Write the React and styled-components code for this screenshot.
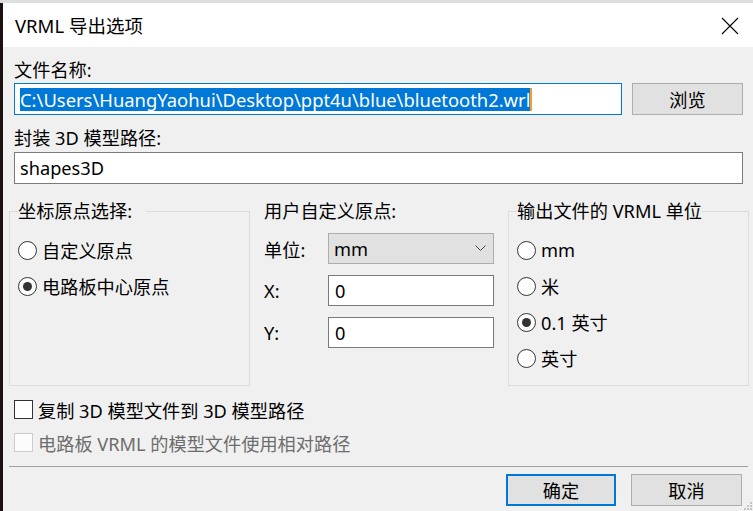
import styled, { createGlobalStyle } from "styled-components";

const GlobalStyle = createGlobalStyle`
  html, body {
    margin: 0;
    padding: 0;
  }
  body {
    font-family: "Noto Sans", "Noto Sans CJK SC", sans-serif;
    font-size: 18.2px;
    color: #000;
  }
`;

const Backdrop = styled.div`
  width: 753px;
  height: 511px;
  overflow: hidden;
  background: linear-gradient(to bottom, #dedede 3px, #1c1212 3px);
  display: flex;
  flex-direction: column;
  align-items: flex-end;
  justify-content: flex-end;
`;

const Dialog = styled.div`
  position: relative;
  width: 750px;
  height: 508px;
  background: #f0f0f0;
  display: flex;
  flex-direction: column;
`;

const TitleBar = styled.div`
  height: 44px;
  flex: none;
  background: #fff;
  display: flex;
  align-items: center;
  justify-content: space-between;
  padding: 0 14px 0 12px;
  font-size: 18.5px;
`;

const CloseIcon = styled.svg`
  width: 18px;
  height: 18px;
  margin-top: 1px;
`;

const FieldLabel = styled.div`
  height: 22px;
  line-height: 22px;
  margin: ${({ $top }) => $top}px 0 0 11px;
`;

const FieldRow = styled.div`
  display: flex;
  gap: 10px;
  margin: ${({ $top }) => $top}px 10px 0 11px;
`;

const TextBox = styled.div`
  flex: 1;
  height: 32px;
  box-sizing: border-box;
  border: 1px solid ${({ $focused }) => ($focused ? "#0078d7" : "#7a7a7a")};
  background: #fff;
  display: flex;
  align-items: center;
  padding-left: ${({ $pad }) => $pad ?? 5}px;
  white-space: nowrap;
  overflow: hidden;
`;

const Selected = styled.span`
  background: #0078d7;
  color: #fff;
  line-height: 23px;
  height: 23px;
  display: inline-block;
  border-right: 2px solid #f0a030;
  font-size: 18.4px;
`;

const Button = styled.div`
  width: ${({ $w }) => $w}px;
  height: 32px;
  box-sizing: border-box;
  flex: none;
  background: #e1e1e1;
  border: ${({ $default }) =>
    $default ? "2px solid #0078d7" : "1px solid #adadad"};
  display: flex;
  align-items: center;
  justify-content: center;
`;

const GroupsRow = styled.div`
  display: flex;
  margin: 16px 4px 0 6px;
  height: 186px;
`;

const Group = styled.fieldset`
  width: 241px;
  box-sizing: border-box;
  margin: 0;
  padding: 0;
  border: 1px solid #dcdcdc;
  min-inline-size: 0;
`;

const Legend = styled.legend`
  margin-left: 8px;
  padding: 0 ${({ $gap }) => $gap ?? 0}px 0 0;
  line-height: 22px;
  height: 22px;
`;

const GroupBody = styled.div`
  padding-top: 10px;
  padding-left: 8px;
`;

const OptionRow = styled.div`
  display: flex;
  align-items: center;
  height: 36px;
  gap: 5px;
`;

const Radio = styled.span`
  width: 19px;
  height: 19px;
  box-sizing: border-box;
  border-radius: 50%;
  border: 1px solid #333;
  background: #fff;
  display: flex;
  align-items: center;
  justify-content: center;

  &::after {
    content: "";
    width: 9px;
    height: 9px;
    border-radius: 50%;
    background: ${({ $checked }) => ($checked ? "#333" : "transparent")};
  }
`;

const Origin = styled.div`
  width: 258px;
  box-sizing: border-box;
  padding-left: 14px;
  padding-right: 14px;
  display: flex;
  flex-direction: column;
`;

const OriginTitle = styled.div`
  line-height: 22px;
  height: 22px;
  margin-bottom: 11px;
`;

const OriginRow = styled.div`
  display: flex;
  align-items: center;
  height: 31px;
  margin-bottom: 11px;
`;

const OriginLabel = styled.span`
  width: 64px;
  flex: none;
`;

const Combo = styled.div`
  width: 166px;
  height: 31px;
  box-sizing: border-box;
  background: #e1e1e1;
  border: 1px solid #adadad;
  display: flex;
  align-items: center;
  justify-content: space-between;
  padding: 0 7px 0 5px;
`;

const NumberBox = styled(TextBox)`
  flex: none;
  width: 166px;
  height: 31px;
`;

const CheckRow = styled.div`
  display: flex;
  align-items: center;
  gap: 5px;
  height: 33px;
  margin-left: 11px;
  margin-top: ${({ $top }) => $top ?? 0}px;
  color: ${({ $disabled }) => ($disabled ? "#6d6d6d" : "#000")};
`;

const CheckBox = styled.span`
  width: 19px;
  height: 19px;
  box-sizing: border-box;
  background: ${({ $disabled }) => ($disabled ? "#fcfcfc" : "#fff")};
  border: 1px solid ${({ $disabled }) => ($disabled ? "#cccccc" : "#333")};
`;

const Separator = styled.div`
  height: 1px;
  background: #a0a0a0;
  margin: 7px 5px 0 6px;
`;

const Footer = styled.div`
  display: flex;
  justify-content: flex-end;
  gap: 15px;
  margin: 7px 11px 0 0;
`;

const Grip = styled.svg`
  position: absolute;
  right: 0;
  bottom: 0;
  width: 10px;
  height: 10px;
`;

export default function App() {
  return (
    <Backdrop>
      <GlobalStyle />
      <Dialog>
        <TitleBar>
          <span>VRML 导出选项</span>
          <CloseIcon viewBox="0 0 18 18">
            <path d="M1 1 L17 17 M17 1 L1 17" stroke="#000" strokeWidth="1.1" fill="none" />
          </CloseIcon>
        </TitleBar>

        <FieldLabel $top={12}>文件名称:</FieldLabel>
        <FieldRow $top={2}>
          <TextBox $focused>
            <Selected>C:\Users\HuangYaohui\Desktop\ppt4u\blue\bluetooth2.wrl</Selected>
          </TextBox>
          <Button $w={111}>浏览</Button>
        </FieldRow>

        <FieldLabel $top={12}>封装 3D 模型路径:</FieldLabel>
        <FieldRow $top={3}>
          <TextBox>shapes3D</TextBox>
        </FieldRow>

        <GroupsRow>
          <Group>
            <Legend $gap={14}>坐标原点选择:</Legend>
            <GroupBody>
              <OptionRow>
                <Radio />
                自定义原点
              </OptionRow>
              <OptionRow>
                <Radio $checked />
                电路板中心原点
              </OptionRow>
            </GroupBody>
          </Group>

          <Origin>
            <OriginTitle>用户自定义原点:</OriginTitle>
            <OriginRow>
              <OriginLabel>单位:</OriginLabel>
              <Combo>
                <span>mm</span>
                <svg width="11" height="7" viewBox="0 0 11 7">
                  <path d="M0.5 0.5 L5.5 5.5 L10.5 0.5" stroke="#444" strokeWidth="1" fill="none" />
                </svg>
              </Combo>
            </OriginRow>
            <OriginRow>
              <OriginLabel>X:</OriginLabel>
              <NumberBox $pad={6}>0</NumberBox>
            </OriginRow>
            <OriginRow>
              <OriginLabel>Y:</OriginLabel>
              <NumberBox $pad={6}>0</NumberBox>
            </OriginRow>
          </Origin>

          <Group>
            <Legend>输出文件的 VRML 单位</Legend>
            <GroupBody>
              <OptionRow>
                <Radio />
                mm
              </OptionRow>
              <OptionRow>
                <Radio />米
              </OptionRow>
              <OptionRow>
                <Radio $checked />
                0.1 英寸
              </OptionRow>
              <OptionRow>
                <Radio />
                英寸
              </OptionRow>
            </GroupBody>
          </Group>
        </GroupsRow>

        <CheckRow $top={7}>
          <CheckBox />
          复制 3D 模型文件到 3D 模型路径
        </CheckRow>
        <CheckRow $disabled>
          <CheckBox $disabled />
          电路板 VRML 的模型文件使用相对路径
        </CheckRow>

        <Separator />

        <Footer>
          <Button $w={110} $default>
            确定
          </Button>
          <Button $w={111}>取消</Button>
        </Footer>

        <Grip viewBox="0 0 10 10">
          <rect x="7" y="1" width="2" height="2" fill="#c4c4c4" />
          <rect x="4" y="4" width="2" height="2" fill="#c4c4c4" />
          <rect x="7" y="4" width="2" height="2" fill="#c4c4c4" />
          <rect x="1" y="7" width="2" height="2" fill="#c4c4c4" />
          <rect x="4" y="7" width="2" height="2" fill="#c4c4c4" />
          <rect x="7" y="7" width="2" height="2" fill="#c4c4c4" />
        </Grip>
      </Dialog>
    </Backdrop>
  );
}
